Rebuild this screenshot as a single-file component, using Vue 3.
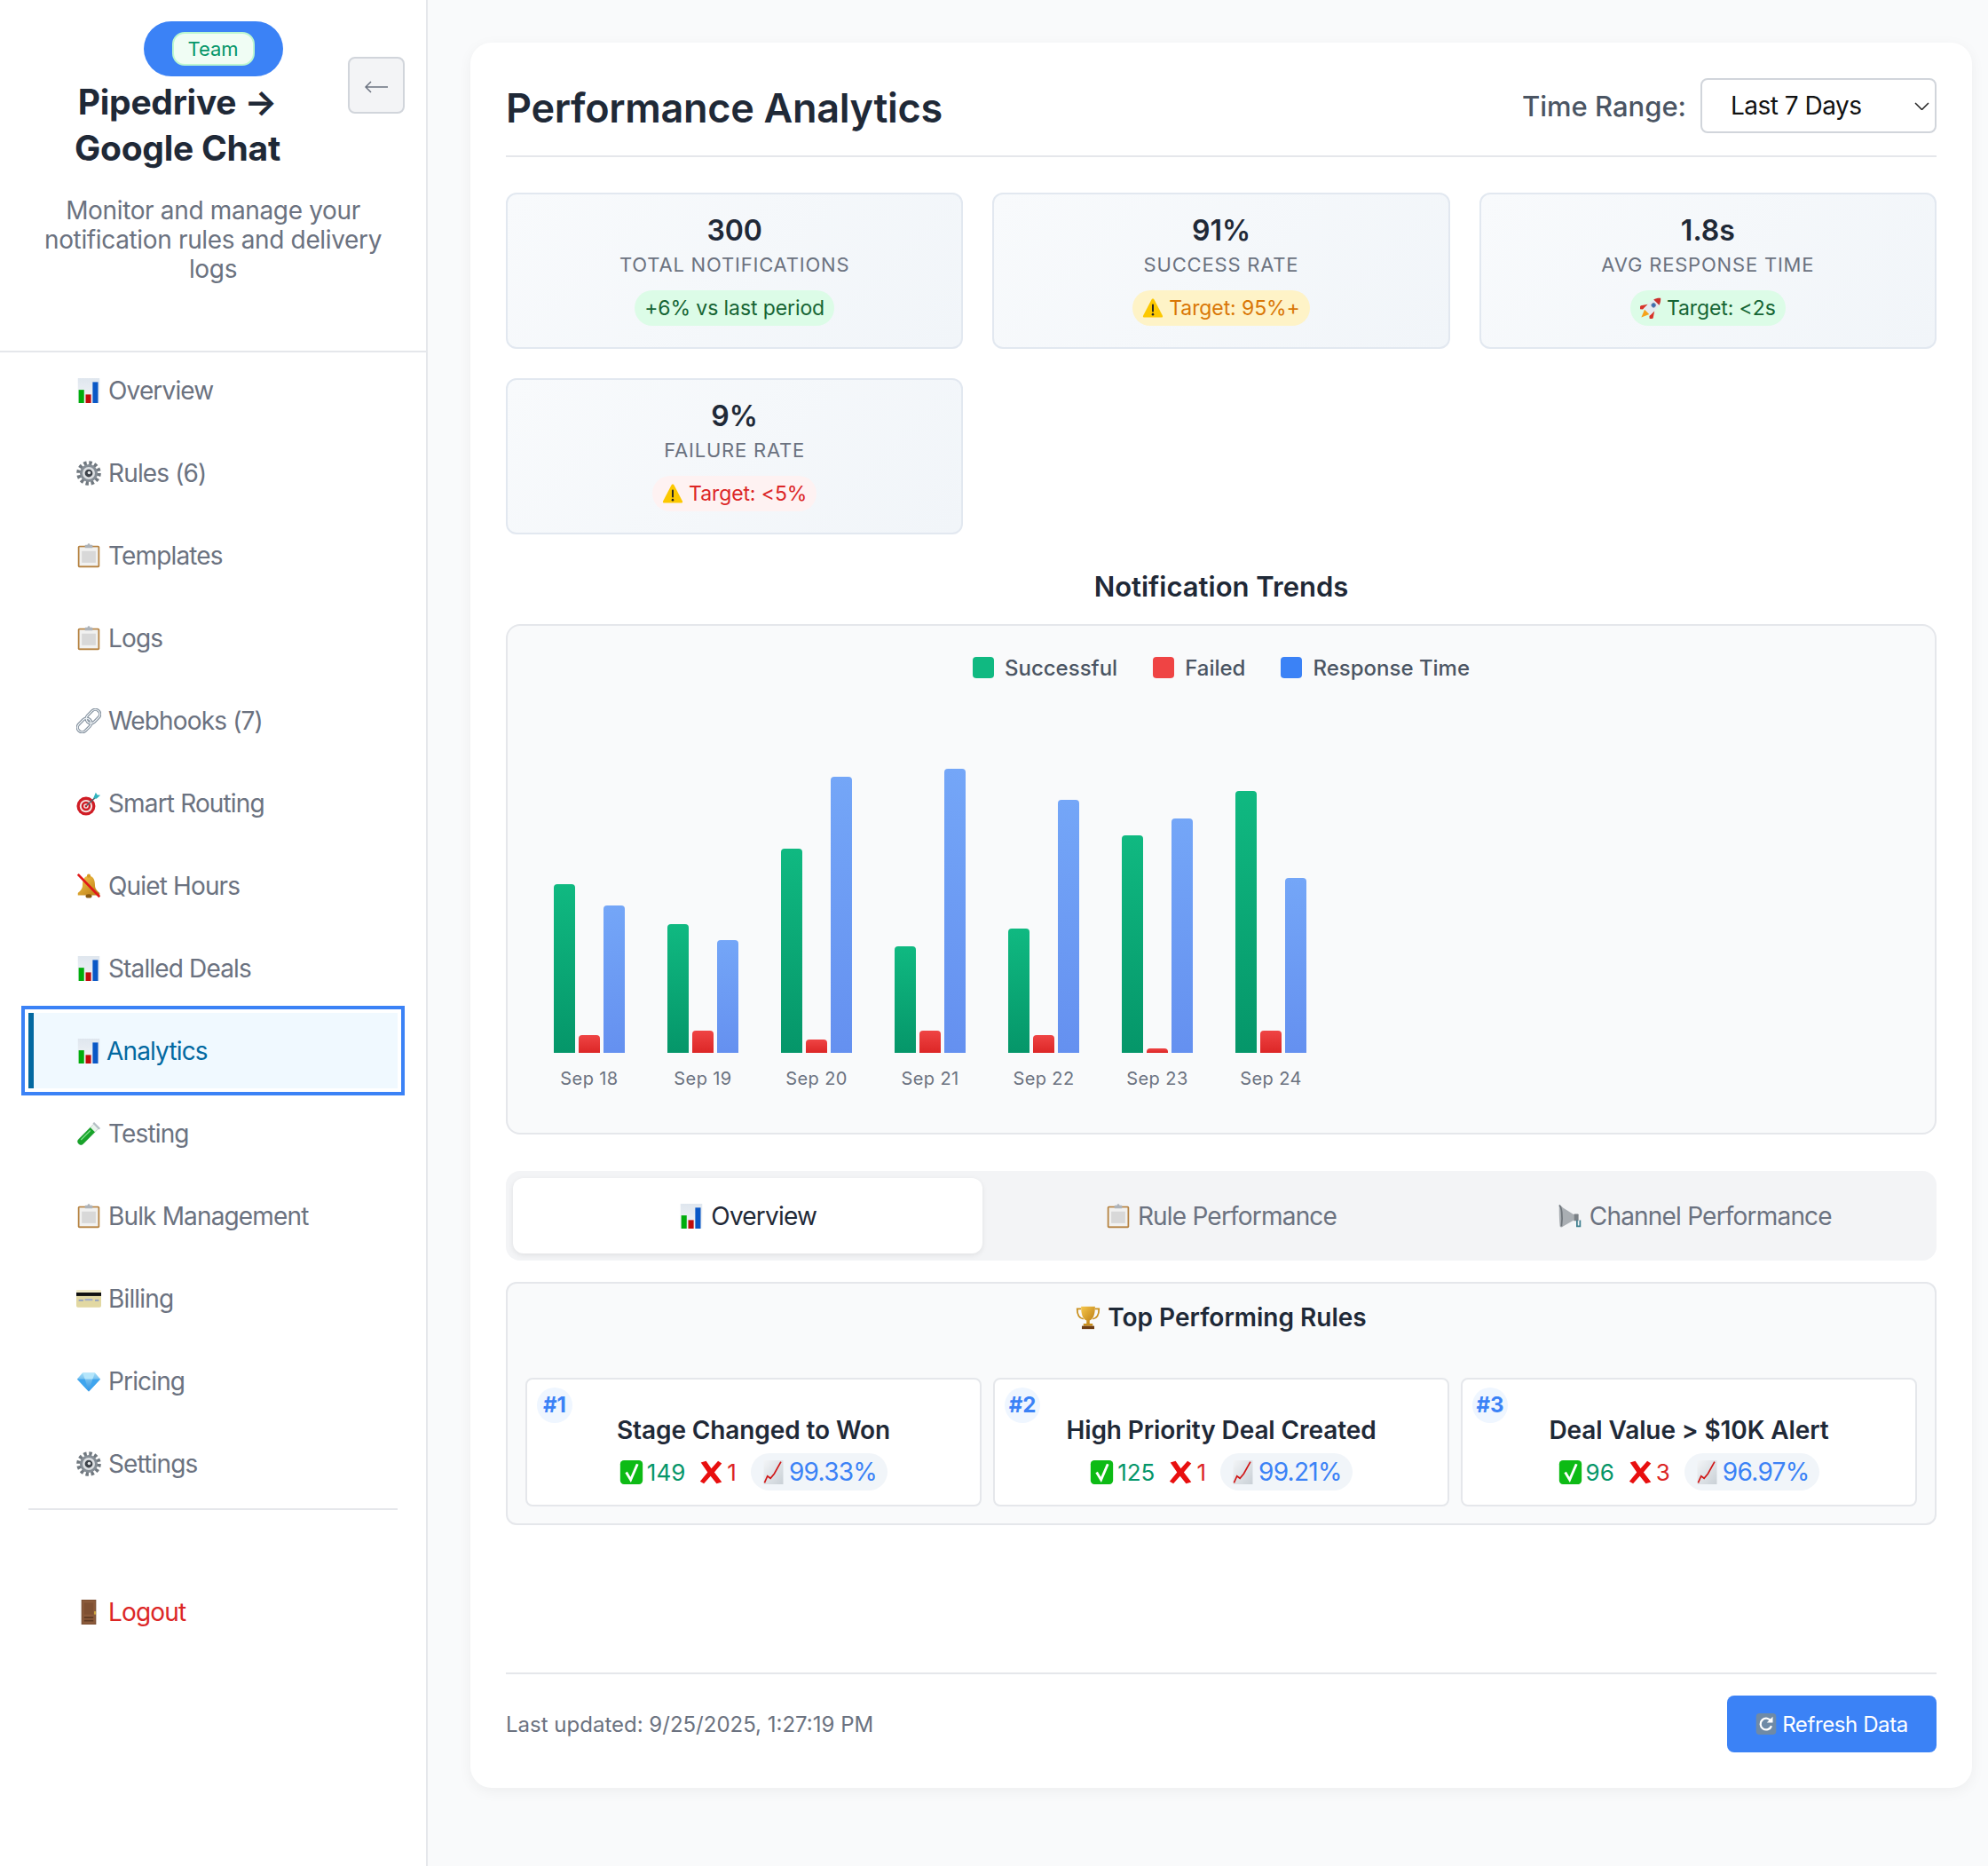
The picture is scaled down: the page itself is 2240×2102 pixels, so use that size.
<template>
  <div class="page">
    <svg class="sprite" aria-hidden="true">
      <defs>
        <linearGradient id="chartBg" x1="0" y1="0" x2="0" y2="1"><stop offset="0" stop-color="#dfe6ee"/><stop offset="1" stop-color="#f4f6f8"/></linearGradient>
        <linearGradient id="gold" x1="0" y1="0" x2="1" y2="1"><stop offset="0" stop-color="#f6c64a"/><stop offset="1" stop-color="#b97a12"/></linearGradient>
        <linearGradient id="gem" x1="0" y1="0" x2="0" y2="1"><stop offset="0" stop-color="#9fdcf8"/><stop offset="1" stop-color="#2f8fe0"/></linearGradient>
        <linearGradient id="sheet" x1="0" y1="0" x2="1" y2="1"><stop offset="0" stop-color="#f3f5f7"/><stop offset="1" stop-color="#c9d0d6"/></linearGradient>
      </defs>
      <symbol id="i-chart" viewBox="0 0 32 32">
        <rect x="2" y="0" width="28" height="32" fill="url(#chartBg)"/>
        <rect x="3" y="15" width="7" height="17" fill="#00ad0c"/>
        <rect x="12" y="21" width="7" height="11" fill="#c00d0d"/>
        <rect x="21" y="5" width="7" height="27" fill="#0a58c6"/>
      </symbol>
      <symbol id="i-gear" viewBox="0 0 32 32">
        <circle cx="16" cy="16" r="13" fill="none" stroke="#70787f" stroke-width="5.500" stroke-dasharray="3.800 3"/>
        <circle cx="16" cy="16" r="11.500" fill="#858d95"/>
        <circle cx="16" cy="16" r="8" fill="#dcdfe2"/>
        <circle cx="16" cy="16" r="5" fill="#3d434a"/>
        <circle cx="16.500" cy="15.500" r="2" fill="#e6e8ea"/>
      </symbol>
      <symbol id="i-clipboard" viewBox="0 0 32 32">
        <rect x="2" y="3" width="28" height="28" rx="2" fill="#b5813f"/>
        <rect x="4" y="5" width="24" height="24" fill="#f1f1f0"/>
        <rect x="7" y="10" width="18" height="15" fill="#d8d8d8"/>
        <rect x="11" y="2" width="10" height="4" rx="1" fill="#aeb4ba"/>
        <circle cx="16" cy="2" r="1.600" fill="#aeb4ba"/>
      </symbol>
      <symbol id="i-link" viewBox="0 0 32 32">
        <g fill="none" stroke="#7c8a98" stroke-width="3.800" transform="rotate(-45 16 16)">
          <rect x="-2" y="10" width="20" height="12" rx="6"/>
          <rect x="14" y="10" width="20" height="12" rx="6"/>
        </g>
        <g fill="none" stroke="#eef2f5" stroke-width="1.500" transform="rotate(-45 16 16)">
          <rect x="-2" y="10" width="20" height="12" rx="6"/>
          <rect x="14" y="10" width="20" height="12" rx="6"/>
        </g>
      </symbol>
      <symbol id="i-target" viewBox="0 0 32 32">
        <circle cx="12.500" cy="19.500" r="12" fill="#d01c25"/>
        <circle cx="12.500" cy="19.500" r="8.200" fill="#f4e6e4"/>
        <circle cx="12.500" cy="19.500" r="6" fill="#d01c25"/>
        <circle cx="12.500" cy="19.500" r="3.200" fill="#f4e6e4"/>
        <circle cx="12.500" cy="19.500" r="1.500" fill="#d01c25"/>
        <path d="M13 19L26 7" stroke="#55606a" stroke-width="1.600"/>
        <path d="M22 9l3-7 2 3 4 .5-5 4.500z" fill="#2fb3bd"/>
      </symbol>
      <symbol id="i-nobell" viewBox="0 0 32 32">
        <path d="M16 3c-6 0-8 5-8 12 0 5-3 7-6 10v3h28v-3c-3-3-6-5-6-10 0-7-2-12-8-12z" fill="url(#gold)"/>
        <circle cx="16" cy="3" r="2.400" fill="#d49a22"/>
        <ellipse cx="16" cy="29" rx="4" ry="2.500" fill="#8a5a10"/>
        <path d="M2 1L30 30" stroke="#e01818" stroke-width="3"/>
      </symbol>
      <symbol id="i-tube" viewBox="0 0 32 32">
        <path d="M23 3l6 6L9 29a4.200 4.200 0 0 1-6-6z" fill="#e8f3ec" stroke="#b9c6c0"/>
        <path d="M18 8l6 6L9 29a4.200 4.200 0 0 1-6-6z" fill="#18a32a"/>
        <path d="M6 24L18 12" stroke="#7fe08a" stroke-width="1.500"/>
        <path d="M22 2l8 8" stroke="#b4bec4" stroke-width="2.600"/>
      </symbol>
      <symbol id="i-card" viewBox="0 0 32 32">
        <rect x="0" y="5" width="32" height="22" rx="2" fill="#e2d8a2"/>
        <rect x="0" y="5" width="32" height="3" fill="#f2ecc9"/>
        <rect x="0" y="8" width="32" height="4.500" fill="#111"/>
        <rect x="3" y="17" width="6" height="2" fill="#8c9bc2"/>
        <rect x="11" y="16" width="10" height="2.500" fill="#a5aec8"/>
        <rect x="24" y="17" width="5" height="2" fill="#8c9bc2"/>
      </symbol>
      <symbol id="i-gem" viewBox="0 0 32 32">
        <path d="M8 5h16l7 8-15 16L1 13z" fill="url(#gem)"/>
        <path d="M8 5l3 8h10l3-8z" fill="#b5e6fb"/>
        <path d="M1 13h10l5 16zM31 13H21l-5 16z" fill="#3fa5ee"/>
      </symbol>
      <symbol id="i-door" viewBox="0 0 32 32">
        <rect x="7" y="0" width="18" height="32" fill="#8b5a3a"/>
        <rect x="7" y="0" width="18" height="32" fill="none" stroke="#6d4228" stroke-width="1"/>
        <rect x="10" y="4" width="12" height="15" fill="#7f5032"/>
        <rect x="10" y="22" width="12" height="2" fill="#5f3a22"/>
        <rect x="10" y="26" width="12" height="2" fill="#5f3a22"/>
        <rect x="23" y="15" width="2" height="4" fill="#d9b23e"/>
      </symbol>
      <symbol id="i-warn" viewBox="0 0 32 32">
        <path d="M16 2c1 0 1.600.5 2.200 1.600l12.300 23.600c.8 1.600 0 2.800-1.700 2.800H3.200c-1.700 0-2.500-1.200-1.700-2.800L13.800 3.600C14.400 2.500 15 2 16 2z" fill="#fcc800"/>
        <rect x="14.700" y="10" width="2.600" height="12" rx="1.200" fill="#222"/>
        <circle cx="16" cy="25.500" r="1.700" fill="#222"/>
      </symbol>
      <symbol id="i-rocket" viewBox="0 0 32 32">
        <g transform="rotate(45 16 16)">
          <path d="M11 24h10l-5 12z" fill="#f5a31a"/>
          <path d="M9 15l-6 9v7l6-5zM23 15l6 9v7l-6-5z" fill="#d8342a"/>
          <path d="M16-5c5 4 7 10 7 17v12H9V12c0-7 2-13 7-17z" fill="#e6ebf1"/>
          <path d="M16-5c3 2.400 4.800 5.600 6 9H10c1.200-3.400 3-6.600 6-9z" fill="#c9302c"/>
          <circle cx="16" cy="10" r="3.200" fill="#3b6fb5" stroke="#7d8c9c"/>
        </g>
      </symbol>
      <symbol id="i-check" viewBox="0 0 32 32">
        <rect x="1" y="0" width="30" height="32" rx="5" fill="#0dbb15"/>
        <path d="M9 16l6 10 9-21" fill="none" stroke="#fff" stroke-width="3.400"/>
      </symbol>
      <symbol id="i-cross" viewBox="0 0 32 32">
        <path d="M2 3l7-2 7 10 9-10 5 3-10 12 10 13-7 2-8-10-9 10-5-3 10-12z" fill="#e80f0f"/>
      </symbol>
      <symbol id="i-up" viewBox="0 0 32 32">
        <rect x="3" y="0" width="26" height="32" fill="url(#sheet)"/>
        <path d="M4 30l4-9 4 3 5-6 9-16" fill="none" stroke="#d01717" stroke-width="2"/>
      </symbol>
      <symbol id="i-trophy" viewBox="0 0 32 32">
        <path d="M7 5H2c0 7 2 12 8 13M25 5h5c0 7-2 12-8 13" fill="none" stroke="#c98f1c" stroke-width="2"/>
        <path d="M7 2h18c0 10-2 16-7 18v4h-4v-4C9 18 7 12 7 2z" fill="url(#gold)"/>
        <rect x="10" y="24" width="12" height="3" fill="#c98f1c"/>
        <rect x="8" y="27" width="16" height="4" fill="#6e3d14"/>
      </symbol>
      <symbol id="i-mega" viewBox="0 0 32 32">
        <path d="M2 2c2 0 3 1 5 3l14 9v7L7 29c-2 2-3 1-4 0C2 20 2 10 2 2z" fill="#a9aeb3"/>
        <path d="M2 2c3 1 5 13 3 27" fill="none" stroke="#6e747a" stroke-width="2"/>
        <rect x="21" y="13" width="6" height="9" rx="1" fill="#7a8086"/>
        <path d="M25 21v8h4v-8" fill="none" stroke="#3f7f8f" stroke-width="2"/>
      </symbol>
      <symbol id="i-refresh" viewBox="0 0 32 32">
        <rect x="1" y="0" width="30" height="32" rx="5" fill="#6f8aa6"/>
        <path d="M23.500 12A8.500 8.500 0 1 0 24 19" fill="none" stroke="#fff" stroke-width="3"/>
        <path d="M26 5v9h-9z" fill="#fff"/>
      </symbol>
    </svg>

    <aside class="sidebar">
      <header class="side-head">
        <span class="plan-pill"><span class="plan-tag">Team</span></span>
        <h1 class="brand-title">Pipedrive →<br>Google Chat</h1>
        <button class="collapse-btn">
          <svg viewBox="0 0 26 14" class="collapse-arrow"><path d="M26 7H1M7 1L1 7l6 6" fill="none" stroke="#6b7280" stroke-width="1.500"/></svg>
        </button>
        <p class="side-sub">Monitor and manage your notification rules and delivery logs</p>
      </header>

      <nav class="nav">
        <a
          v-for="item in navItems"
          :key="item.label"
          :class="['nav-item', { active: item.label === 'Analytics' }]"
        >
          <svg class="nav-icon"><use :href="'#i-' + item.icon" /></svg>
          <span>{{ item.label }}</span>
        </a>
      </nav>
      <div class="side-foot">
        <a class="nav-item logout">
          <svg class="nav-icon"><use href="#i-door" /></svg>
          <span>Logout</span>
        </a>
      </div>
    </aside>

    <main class="main">
      <section class="card">
        <div class="card-head">
          <h2 class="page-title">Performance Analytics</h2>
          <div class="range">
            <label class="range-label">Time Range:</label>
            <div class="select">
              <span>Last 7 Days</span>
              <svg class="chevron" viewBox="0 0 17 9"><path d="M1 1l7.500 7.500L16 1" fill="none" stroke="#222" stroke-width="1.500"/></svg>
            </div>
          </div>
        </div>

        <div class="stats">
          <div v-for="s in stats" :key="s.label" class="stat">
            <div class="stat-value">{{ s.value }}</div>
            <div class="stat-label">{{ s.label }}</div>
            <span :class="['stat-pill', s.tone]">
              <svg v-if="s.icon" class="pill-icon"><use :href="'#i-' + s.icon" /></svg>
              {{ s.note }}
            </span>
          </div>
        </div>

        <h3 class="trend-title">Notification Trends</h3>
        <div class="chart">
          <div class="legend">
            <span class="legend-item"><i class="swatch ok"></i>Successful</span>
            <span class="legend-item"><i class="swatch bad"></i>Failed</span>
            <span class="legend-item"><i class="swatch time"></i>Response Time</span>
          </div>
          <div class="plot">
            <div v-for="d in days" :key="d.label" class="day">
              <div class="bars">
                <div class="bar ok" :style="{ height: d.ok + 'px' }"></div>
                <div class="bar bad" :style="{ height: d.bad + 'px' }"></div>
                <div class="bar time" :style="{ height: d.time + 'px' }"></div>
              </div>
              <div class="day-label">{{ d.label }}</div>
            </div>
          </div>
        </div>

        <div class="tabs">
          <button v-for="t in tabs" :key="t.label" :class="['tab', { active: t.active }]">
            <svg class="tab-icon"><use :href="'#i-' + t.icon" /></svg>
            {{ t.label }}
          </button>
        </div>

        <div class="panel">
          <h4 class="panel-title">
            <svg class="trophy"><use href="#i-trophy" /></svg>
            Top Performing Rules
          </h4>
          <div class="rules">
            <div v-for="(r, i) in rules" :key="r.name" class="rule">
              <span class="rank">#{{ i + 1 }}</span>
              <div class="rule-name">{{ r.name }}</div>
              <div class="rule-stats">
                <span class="good"><svg class="mini"><use href="#i-check" /></svg>{{ r.ok }}</span>
                <span class="fail"><svg class="mini"><use href="#i-cross" /></svg>{{ r.bad }}</span>
                <span class="rate"><svg class="mini"><use href="#i-up" /></svg>{{ r.rate }}</span>
              </div>
            </div>
          </div>
        </div>

        <footer class="card-foot">
          <span class="updated">Last updated: 9/25/2025, 1:27:19 PM</span>
          <button class="refresh">
            <svg class="refresh-icon"><use href="#i-refresh" /></svg>
            Refresh Data
          </button>
        </footer>
      </section>
    </main>
  </div>
</template>

<script setup>
const navItems = [
  { label: 'Overview', icon: 'chart' },
  { label: 'Rules (6)', icon: 'gear' },
  { label: 'Templates', icon: 'clipboard' },
  { label: 'Logs', icon: 'clipboard' },
  { label: 'Webhooks (7)', icon: 'link' },
  { label: 'Smart Routing', icon: 'target' },
  { label: 'Quiet Hours', icon: 'nobell' },
  { label: 'Stalled Deals', icon: 'chart' },
  { label: 'Analytics', icon: 'chart' },
  { label: 'Testing', icon: 'tube' },
  { label: 'Bulk Management', icon: 'clipboard' },
  { label: 'Billing', icon: 'card' },
  { label: 'Pricing', icon: 'gem' },
  { label: 'Settings', icon: 'gear' }
]

const stats = [
  { value: '300', label: 'Total Notifications', note: '+6% vs last period', tone: 'green' },
  { value: '91%', label: 'Success Rate', note: 'Target: 95%+', tone: 'amber', icon: 'warn' },
  { value: '1.8s', label: 'Avg Response Time', note: 'Target: <2s', tone: 'green', icon: 'rocket' },
  { value: '9%', label: 'Failure Rate', note: 'Target: <5%', tone: 'red', icon: 'warn' }
]

const days = [
  { label: 'Sep 18', ok: 190, bad: 20, time: 166 },
  { label: 'Sep 19', ok: 145, bad: 25, time: 127 },
  { label: 'Sep 20', ok: 230, bad: 15, time: 311 },
  { label: 'Sep 21', ok: 120, bad: 25, time: 320 },
  { label: 'Sep 22', ok: 140, bad: 20, time: 285 },
  { label: 'Sep 23', ok: 245, bad: 5, time: 264 },
  { label: 'Sep 24', ok: 295, bad: 25, time: 197 }
]

const tabs = [
  { label: 'Overview', icon: 'chart', active: true },
  { label: 'Rule Performance', icon: 'clipboard' },
  { label: 'Channel Performance', icon: 'mega' }
]

const rules = [
  { name: 'Stage Changed to Won', ok: 149, bad: 1, rate: '99.33%' },
  { name: 'High Priority Deal Created', ok: 125, bad: 1, rate: '99.21%' },
  { name: 'Deal Value > $10K Alert', ok: 96, bad: 3, rate: '96.97%' }
]
</script>

<style>
html, body {
  margin: 0;
  background: #f9fafb;
}
</style>

<style scoped>
.page {
  display: flex;
  min-height: 2102px;
  font-family: Inter, "Liberation Sans", sans-serif;
  background: #f9fafb;
  color: #1f2937;
}

.sprite {
  position: absolute;
  width: 0;
  height: 0;
}

.sidebar {
  width: 480px;
  flex-shrink: 0;
  background: #fff;
  border-right: 2px solid #e5e7eb;
}

.side-head {
  position: relative;
  box-sizing: border-box;
  height: 397px;
  padding: 24px 24px 0;
  border-bottom: 2px solid #e5e7eb;
}

.plan-pill {
  display: flex;
  align-items: center;
  justify-content: center;
  width: 157px;
  height: 62px;
  margin: 0 auto;
  background: #3b82f6;
  border-radius: 31px;
}

.plan-tag {
  box-sizing: border-box;
  width: 93px;
  height: 38px;
  line-height: 34px;
  text-align: center;
  font-size: 22px;
  color: #059669;
  background: #f0fdf4;
  border: 2px solid #bbf7d0;
  border-radius: 14px;
}

.brand-title {
  width: 352px;
  margin: 3px 0 0;
  font-size: 39px;
  line-height: 52px;
  font-weight: 700;
  letter-spacing: -0.25px;
  text-align: center;
  color: #1f2937;
}

.collapse-btn {
  position: absolute;
  top: 64px;
  right: 24px;
  display: flex;
  align-items: center;
  justify-content: center;
  width: 64px;
  height: 64px;
  padding: 0;
  background: #f3f4f6;
  border: 2px solid #d1d5db;
  border-radius: 8px;
}

.collapse-arrow {
  width: 26px;
  height: 14px;
  margin-top: 4px;
}

.side-sub {
  margin: 28px 0 0;
  font-size: 28px;
  line-height: 33px;
  letter-spacing: -0.35px;
  text-align: center;
  color: #6b7280;
}

.nav {
  display: flex;
  flex-direction: column;
  gap: 8px;
  margin: 0 32px;
  padding: 0 0 8px;
  border-bottom: 2px solid #e5e7eb;
}

.nav-item {
  display: flex;
  align-items: center;
  gap: 8px;
  height: 85px;
  padding-left: 54px;
  font-size: 28px;
  letter-spacing: -0.85px;
  color: #6b7280;
}

.nav-item.active {
  box-sizing: border-box;
  padding-left: 48px;
  gap: 6px;
  color: #0369a1;
  background: #f0f9ff;
  border-left: 6px solid #0369a1;
  outline: 4px solid #3b82f6;
  outline-offset: 4px;
}

.nav-icon {
  width: 28px;
  height: 28px;
  flex-shrink: 0;
}

.side-foot {
  margin: 72px 32px 0;
}

.logout {
  color: #dc2626;
}

.main {
  flex: 1;
  min-width: 0;
  padding: 48px 18px 0 48px;
}

.card {
  box-sizing: border-box;
  height: 1966px;
  padding: 40px;
  background: #fff;
  border-radius: 24px;
  box-shadow: 0 4px 16px rgba(0, 0, 0, 0.05);
  display: flex;
  flex-direction: column;
}

.card-head {
  box-sizing: border-box;
  display: flex;
  justify-content: space-between;
  align-items: flex-start;
  height: 89px;
  border-bottom: 2px solid #e5e7eb;
}

.page-title {
  margin: 0;
  font-size: 45px;
  line-height: 68px;
  font-weight: 600;
  letter-spacing: -0.3px;
  color: #1f2937;
}

.range {
  display: flex;
  align-items: center;
  gap: 16px;
}

.range-label {
  font-size: 31px;
  font-weight: 500;
  color: #4b5563;
}

.select {
  box-sizing: border-box;
  display: flex;
  align-items: center;
  justify-content: space-between;
  width: 266px;
  height: 62px;
  padding: 0 6px 0 32px;
  font-size: 28px;
  letter-spacing: -0.5px;
  color: #111;
  background: #fff;
  border: 2px solid #d1d5db;
  border-radius: 8px;
}

.chevron {
  width: 17px;
  height: 9px;
}

.stats {
  display: grid;
  grid-template-columns: repeat(3, 1fr);
  gap: 33px;
  margin-top: 40px;
}

.stat {
  box-sizing: border-box;
  display: flex;
  flex-direction: column;
  align-items: center;
  height: 176px;
  padding-top: 21px;
  background: linear-gradient(135deg, #f8fafc, #f1f5f9);
  border: 2px solid #e2e8f0;
  border-radius: 12px;
}

.stat-value {
  font-size: 32px;
  line-height: 40px;
  font-weight: 600;
  color: #1f2937;
}

.stat-label {
  margin-top: 3px;
  font-size: 22px;
  line-height: 30px;
  letter-spacing: 0.8px;
  text-transform: uppercase;
  color: #6b7280;
}

.stat-pill {
  display: inline-flex;
  align-items: center;
  gap: 6px;
  height: 40px;
  margin-top: 14px;
  padding: 0 11px;
  font-size: 23px;
  font-weight: 400;
  letter-spacing: -0.1px;
  border-radius: 20px;
}

.stat-pill.green {
  color: #166534;
  background: #dcfce7;
}

.stat-pill.amber {
  color: #d97706;
  background: #fef3c7;
}

.stat-pill.red {
  color: #dc2626;
  background: #fef2f2;
}

.pill-icon {
  width: 24px;
  height: 24px;
}

.trend-title {
  margin: 39px 0 0;
  font-size: 31px;
  line-height: 40px;
  font-weight: 600;
  text-align: center;
  color: #1f2937;
}

.chart {
  box-sizing: border-box;
  height: 575px;
  margin-top: 22px;
  padding: 31px 52px 0;
  background: #f9fafb;
  border: 2px solid #e5e7eb;
  border-radius: 16px;
}

.legend {
  display: flex;
  justify-content: center;
  gap: 40px;
  height: 32px;
}

.legend-item {
  display: flex;
  align-items: center;
  gap: 12px;
  font-size: 24px;
  font-weight: 500;
  color: #4b5563;
}

.swatch {
  width: 24px;
  height: 24px;
  border-radius: 4px;
}

.swatch.ok {
  background: #10b981;
}

.swatch.bad {
  background: #ef4444;
}

.swatch.time {
  background: #3b82f6;
}

.plot {
  display: flex;
  align-items: flex-end;
  gap: 48px;
  height: 418px;
}

.day {
  width: 80px;
}

.bars {
  display: flex;
  align-items: flex-end;
  gap: 4px;
}

.bar {
  width: 24px;
  flex-shrink: 0;
  border-radius: 4px 4px 0 0;
}

.bar.ok {
  background: linear-gradient(180deg, #10b981, #059669);
}

.bar.bad {
  background: linear-gradient(180deg, #ef4444, #dc2626);
}

.bar.time {
  background: linear-gradient(180deg, #3b82f6, #2563eb);
  opacity: 0.7;
}

.day-label {
  height: 58px;
  margin: 0 -12px -58px;
  line-height: 58px;
  font-size: 20px;
  letter-spacing: 0.4px;
  text-align: center;
  color: #6b7280;
}

.tabs {
  display: flex;
  gap: 4px;
  height: 101px;
  box-sizing: border-box;
  margin-top: 41px;
  padding: 8px;
  background: #f3f4f6;
  border-radius: 16px;
}

.tab {
  flex: 1;
  display: flex;
  align-items: center;
  justify-content: center;
  gap: 8px;
  padding: 0;
  font-family: inherit;
  font-size: 28px;
  letter-spacing: -0.8px;
  color: #6b7280;
  background: transparent;
  border: 0;
  border-radius: 12px;
}

.tab.active {
  color: #1f2937;
  background: #fff;
  box-shadow: 0 2px 6px rgba(0, 0, 0, 0.08);
}

.tab-icon {
  width: 28px;
  height: 28px;
}

.panel {
  box-sizing: border-box;
  height: 274px;
  margin-top: 24px;
  padding: 0 20px;
  background: #f9fafb;
  border: 2px solid #e5e7eb;
  border-radius: 12px;
}

.panel-title {
  display: flex;
  align-items: center;
  justify-content: center;
  gap: 8px;
  height: 76px;
  margin: 0;
  font-size: 28px;
  font-weight: 600;
  color: #1f2937;
}

.trophy {
  width: 28px;
  height: 28px;
}

.rules {
  display: grid;
  grid-template-columns: repeat(3, 1fr);
  gap: 13px;
  margin-top: 30px;
}

.rule {
  box-sizing: border-box;
  position: relative;
  display: flex;
  flex-direction: column;
  align-items: center;
  height: 145px;
  padding-top: 37px;
  background: #fff;
  border: 2px solid #e5e7eb;
  border-radius: 8px;
}

.rank {
  position: absolute;
  top: 9px;
  left: 11px;
  width: 40px;
  height: 40px;
  line-height: 40px;
  font-size: 24px;
  font-weight: 700;
  text-align: center;
  color: #3b82f6;
  background: #eff6ff;
  border-radius: 20px;
}

.rule-name {
  font-size: 28px;
  line-height: 40px;
  font-weight: 600;
  letter-spacing: -0.1px;
  color: #1f2937;
}

.rule-stats {
  display: flex;
  align-items: center;
  gap: 16px;
  margin-top: 6px;
  font-size: 26px;
}

.rule-stats > span {
  display: inline-flex;
  align-items: center;
  gap: 4px;
}

.mini {
  width: 27px;
  height: 27px;
}

.good {
  color: #059669;
}

.fail {
  color: #dc2626;
}

.rate {
  height: 42px;
  padding: 0 12px;
  font-size: 28px;
  letter-spacing: -0.7px;
  color: #3b82f6;
  background: #f1f5f9;
  border-radius: 21px;
}

.card-foot {
  box-sizing: border-box;
  display: flex;
  justify-content: space-between;
  align-items: center;
  margin-top: auto;
  height: 90px;
  padding-top: 24px;
  border-top: 2px solid #e5e7eb;
}

.updated {
  font-size: 24px;
  color: #6b7280;
}

.refresh {
  display: flex;
  align-items: center;
  justify-content: center;
  gap: 6px;
  width: 236px;
  height: 64px;
  padding: 0;
  font-family: inherit;
  font-size: 24px;
  letter-spacing: -0.4px;
  color: #fff;
  background: #3b82f6;
  border: 0;
  border-radius: 8px;
}

.refresh-icon {
  width: 24px;
  height: 24px;
}
</style>
